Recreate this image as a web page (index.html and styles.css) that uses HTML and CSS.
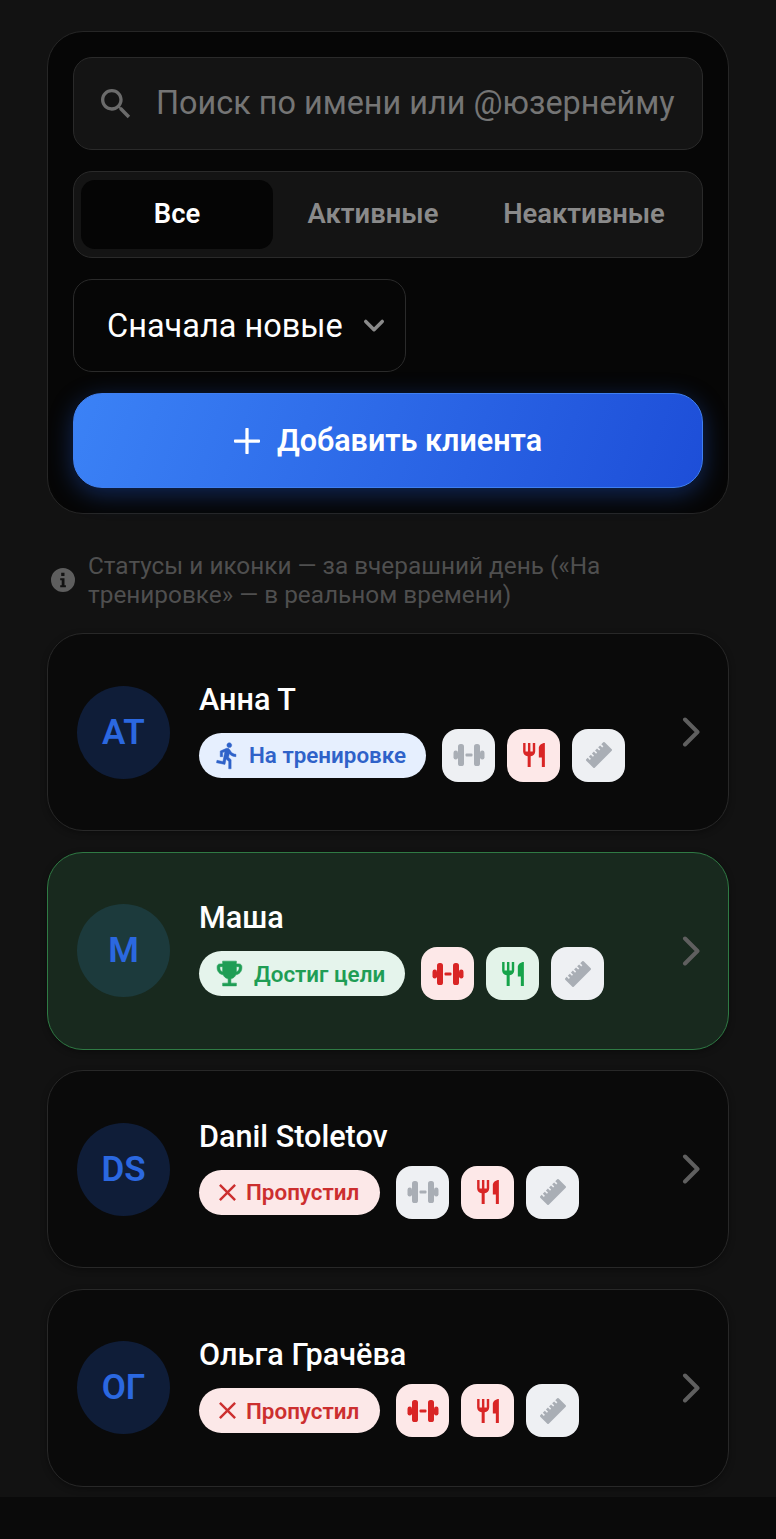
FILE: index.html
```html
<!DOCTYPE html>
<html lang="ru">
<head>
  <meta charset="UTF-8">
  <meta name="viewport" content="width=device-width, initial-scale=1.0">
  <title>Клиенты</title>
  <link rel="stylesheet" href="styles.css">
</head>
<body>

  <svg class="sprite" width="0" height="0">
    <symbol id="i-dumbbell" viewBox="0 0 32 32">
      <rect x="0.5" y="11.5" width="4.5" height="9" rx="2.2"/>
      <rect x="5" y="5" width="6" height="22" rx="2.6"/>
      <rect x="12.5" y="14.5" width="7" height="3" rx="1"/>
      <rect x="21" y="5" width="6" height="22" rx="2.6"/>
      <rect x="27" y="11.5" width="4.5" height="9" rx="2.2"/>
    </symbol>
    <symbol id="i-food" viewBox="-1.25 -1.25 26.5 26.5">
      <path d="M11 9H9V2H7v7H5V2H3v7c0 2.12 1.66 3.84 3.75 3.97V22h2.5v-9.03C11.34 12.84 13 11.12 13 9V2h-2v7zm5-3v8h2.5v8H21V2c-2.76 0-5 2.24-5 4z"/>
    </symbol>
    <symbol id="i-ruler" viewBox="0 0 32 32">
      <path transform="rotate(-45 16 16)" d="M4 10h2v3h1.6v-3h2.8v3H12v-3h2.8v3h1.6v-3h2.8v3h1.6v-3h2.8v3h1.6v-3H28a1 1 0 0 1 1 1V21a1 1 0 0 1-1 1H4a1 1 0 0 1-1-1V11a1 1 0 0 1 1-1z"/>
    </symbol>
    <symbol id="i-run" viewBox="0 0 24 24">
      <path d="M13.49 5.48c1.1 0 2-.9 2-2s-.9-2-2-2-2 .9-2 2 .9 2 2 2zm-3.6 13.9l1-4.4 2.1 2v6h2v-7.5l-2.1-2 .6-3c1.3 1.5 3.3 2.5 5.5 2.5v-2c-1.9 0-3.5-1-4.3-2.4l-1-1.6c-.4-.6-1-1-1.7-1-.3 0-.5.1-.8.1l-5.2 2.2v4.7h2v-3.4l1.8-.7-1.6 8.1-4.9-1-.4 2 7 1.4z"/>
    </symbol>
    <symbol id="i-trophy" viewBox="0 0 24 24">
      <path d="M19 5h-2V3H7v2H5c-1.1 0-2 .9-2 2v1c0 2.55 1.92 4.63 4.39 4.94.63 1.5 1.98 2.63 3.61 2.96V19H7v2h10v-2h-4v-3.1c1.63-.33 2.98-1.46 3.61-2.96C19.08 12.63 21 10.55 21 8V7c0-1.1-.9-2-2-2zM5 8V7h2v3.82C5.84 10.4 5 9.3 5 8zm14 0c0 1.3-.84 2.4-2 2.82V7h2v1z"/>
    </symbol>
    <symbol id="i-close" viewBox="0 0 24 24">
      <path d="M19 6.41L17.59 5 12 10.59 6.41 5 5 6.41 10.59 12 5 17.59 6.41 19 12 13.41 17.59 19 19 17.59 13.41 12z"/>
    </symbol>
    <symbol id="i-chevron" viewBox="0 0 24 24">
      <path d="M8 2l10 10-10 10" fill="none" stroke="currentColor" stroke-width="3.2" stroke-linecap="round" stroke-linejoin="round"/>
    </symbol>
  </svg>

  <main class="page">
    <section class="panel">
      <div class="search">
        <svg class="search-icon" viewBox="0 0 24 24"><path d="M15.5 14h-.79l-.28-.27C15.41 12.59 16 11.11 16 9.5 16 5.91 13.09 3 9.5 3S3 5.91 3 9.5 5.91 16 9.5 16c1.61 0 3.09-.59 4.23-1.57l.27.28v.79l5 4.99L20.49 19l-4.99-5zm-6 0C7.01 14 5 11.99 5 9.5S7.01 5 9.5 5 14 7.01 14 9.5 11.99 14 9.5 14z"/></svg>
        <span class="search-text">Поиск по имени или @юзернейму</span>
      </div>

      <div class="tabs">
        <div class="tab tab-active">Все</div>
        <div class="tab">Активные</div>
        <div class="tab">Неактивные</div>
      </div>

      <div class="sort">
        <span>Сначала новые</span>
        <svg class="sort-icon" viewBox="0 0 24 24"><path d="M3 7l9 9 9-9" fill="none" stroke="currentColor" stroke-width="3.8" stroke-linecap="round" stroke-linejoin="round"/></svg>
      </div>

      <button class="add-btn" type="button">
        <svg class="add-icon" viewBox="0 0 24 24"><path d="M12 1v22M1 12h22" fill="none" stroke="currentColor" stroke-width="3" stroke-linecap="round"/></svg>
        <span>Добавить клиента</span>
      </button>
    </section>

    <p class="hint">
      <svg class="hint-icon" viewBox="0 0 24 24"><path fill-rule="evenodd" d="M12 0a12 12 0 1 0 0 24 12 12 0 0 0 0-24zm-1.8 4.8h3.3v3.3h-3.3zM9.2 10.2h4.3v7h1.400v2H9.200v-2h1.500v-5H9.200z"/></svg>
      <span>Статусы и иконки — за вчерашний день («На тренировке» — в реальном времени)</span>
    </p>

    <div class="clients">
      <article class="card">
        <div class="avatar">АТ</div>
        <div class="info">
          <div class="name">Анна Т</div>
          <div class="row">
            <span class="chip chip-blue"><svg class="chip-icon"><use href="#i-run"/></svg>На тренировке</span>
            <div class="tiles">
              <span class="tile tile-gray"><svg><use href="#i-dumbbell"/></svg></span>
              <span class="tile tile-red"><svg><use href="#i-food"/></svg></span>
              <span class="tile tile-gray"><svg><use href="#i-ruler"/></svg></span>
            </div>
          </div>
        </div>
        <svg class="chevron"><use href="#i-chevron"/></svg>
      </article>

      <article class="card card-goal">
        <div class="avatar">М</div>
        <div class="info">
          <div class="name">Маша</div>
          <div class="row">
            <span class="chip chip-green"><svg class="chip-icon"><use href="#i-trophy"/></svg>Достиг цели</span>
            <div class="tiles">
              <span class="tile tile-red"><svg><use href="#i-dumbbell"/></svg></span>
              <span class="tile tile-green"><svg><use href="#i-food"/></svg></span>
              <span class="tile tile-gray"><svg><use href="#i-ruler"/></svg></span>
            </div>
          </div>
        </div>
        <svg class="chevron"><use href="#i-chevron"/></svg>
      </article>

      <article class="card">
        <div class="avatar">DS</div>
        <div class="info">
          <div class="name">Danil Stoletov</div>
          <div class="row">
            <span class="chip chip-red"><svg class="chip-icon"><use href="#i-close"/></svg>Пропустил</span>
            <div class="tiles">
              <span class="tile tile-gray"><svg><use href="#i-dumbbell"/></svg></span>
              <span class="tile tile-red"><svg><use href="#i-food"/></svg></span>
              <span class="tile tile-gray"><svg><use href="#i-ruler"/></svg></span>
            </div>
          </div>
        </div>
        <svg class="chevron"><use href="#i-chevron"/></svg>
      </article>

      <article class="card">
        <div class="avatar">ОГ</div>
        <div class="info">
          <div class="name">Ольга Грачёва</div>
          <div class="row">
            <span class="chip chip-red"><svg class="chip-icon"><use href="#i-close"/></svg>Пропустил</span>
            <div class="tiles">
              <span class="tile tile-red"><svg><use href="#i-dumbbell"/></svg></span>
              <span class="tile tile-red"><svg><use href="#i-food"/></svg></span>
              <span class="tile tile-gray"><svg><use href="#i-ruler"/></svg></span>
            </div>
          </div>
        </div>
        <svg class="chevron"><use href="#i-chevron"/></svg>
      </article>
    </div>
  </main>

  <div class="bottom-bar"></div>

</body>
</html>
```

FILE: styles.css
```css
* {
  box-sizing: border-box;
}
body {
  margin: 0;
  background-color: #0a0a0a;
  font-family: Roboto, "Liberation Sans", sans-serif;
  color: #fff;
}
.sprite {
  display: block;
  height: 0;
}
.page {
  height: 1497px;
  padding: 31px 47px 0;
  background-color: #121212;
}
.bottom-bar {
  height: 42px;
}

/* top panel */
.panel {
  display: flex;
  flex-direction: column;
  gap: 21px;
  height: 483px;
  padding: 25px;
  background-color: #060606;
  border: 1px solid #262626;
  border-radius: 36px;
}
.search {
  display: flex;
  align-items: center;
  gap: 20px;
  height: 93px;
  padding: 0 22px;
  background-color: #141414;
  border: 1px solid #2a2a2a;
  border-radius: 19px;
}
.search-icon {
  width: 40px;
  height: 40px;
  flex: none;
  fill: #6b6b6b;
}
.search-text {
  padding-bottom: 2px;
  font-size: 32.4px;
  color: #757575;
  white-space: nowrap;
}
.tabs {
  display: grid;
  grid-template-columns: 192px 200px 222px;
  height: 87px;
  padding: 8px 7px;
  background-color: #141414;
  border: 1px solid #2a2a2a;
  border-radius: 19px;
}
.tab {
  display: flex;
  align-items: center;
  justify-content: center;
  padding-bottom: 2px;
  font-size: 27.4px;
  font-weight: 600;
  color: #8a8a8a;
}
.tab-active {
  background-color: #050505;
  border-radius: 14px;
  color: #fff;
}
.sort {
  display: flex;
  align-items: center;
  justify-content: space-between;
  width: 333px;
  height: 93px;
  padding: 0 20px 0 33px;
  background-color: #060606;
  border: 1px solid #2a2a2a;
  border-radius: 19px;
  font-size: 32.5px;
}
.sort-icon {
  width: 22px;
  height: 22px;
  color: #8a8a8a;
}
.add-btn {
  display: flex;
  align-items: center;
  justify-content: center;
  gap: 17px;
  height: 95px;
  background: linear-gradient(110deg, #3b82f6, #1d4ed8);
  border: 1px solid #3f7ff0;
  border-radius: 29px;
  box-shadow: 0 6px 24px rgba(37, 99, 235, 0.36);
  color: #fff;
  font-family: inherit;
  font-size: 30.5px;
  font-weight: 600;
}
.add-icon {
  width: 26px;
  height: 26px;
}

/* hint */
.hint {
  display: flex;
  align-items: center;
  gap: 13px;
  margin: 37px 0 24px;
  padding-left: 4px;
  font-size: 24.35px;
  line-height: 29px;
  color: #4f4f4f;
}
.hint-icon {
  width: 24px;
  height: 24px;
  flex: none;
  fill: #5e5e5e;
}

/* clients */
.clients {
  display: flex;
  flex-direction: column;
  gap: 20.67px;
}
.card {
  display: flex;
  align-items: center;
  height: 198px;
  padding: 0 23px 0 29px;
  background-color: #0a0a0a;
  border: 1px solid #282828;
  border-radius: 36px;
  box-shadow: 0 2px 6px rgba(0, 0, 0, 0.35);
}
.card-goal {
  background-color: #18291e;
  border-color: #2f7a44;
}
.avatar {
  display: flex;
  align-items: center;
  justify-content: center;
  width: 93px;
  height: 93px;
  flex: none;
  margin-right: 29px;
  background-color: #0f1d38;
  border-radius: 50%;
  font-size: 35px;
  font-weight: 600;
  color: #2b68e0;
}
.card-goal .avatar {
  background-color: #1c3a3c;
}
.info {
  display: flex;
  flex-direction: column;
  gap: 13px;
  flex: 1;
}
.name {
  font-size: 30.6px;
  font-weight: 500;
  line-height: 33px;
}
.row {
  display: flex;
  align-items: center;
  gap: 16px;
}
.chip {
  display: flex;
  align-items: center;
  gap: 7px;
  height: 45px;
  padding: 0 20px 0 14px;
  border-radius: 23px;
  font-size: 22.4px;
  font-weight: 600;
  white-space: nowrap;
}
.chip-icon {
  width: 29px;
  height: 29px;
  fill: currentColor;
  stroke: currentColor;
  stroke-width: 0.4px;
}
.chip-blue {
  background-color: #e6effe;
  color: #2f62c9;
}
.chip-green {
  background-color: #e5f4ec;
  color: #1f9d55;
}
.chip-green .chip-icon {
  width: 33px;
  height: 33px;
  margin-right: 1px;
}
.chip-red {
  gap: 4px;
  padding-right: 21px;
  background-color: #fce8e8;
  color: #cc2f2f;
}
.chip-red .chip-icon {
  stroke: none;
}
.tiles {
  display: flex;
  gap: 12px;
}
.tile {
  display: flex;
  align-items: center;
  justify-content: center;
  width: 53px;
  height: 53px;
  border-radius: 16px;
}
.tile svg {
  width: 32px;
  height: 32px;
  fill: currentColor;
}
.tile-gray {
  background-color: #eef0f3;
  color: #a9aeb5;
}
.tile-red {
  background-color: #fde8e8;
  color: #d92525;
}
.tile-green {
  background-color: #e3f3e9;
  color: #16a34a;
}
.chevron {
  width: 30px;
  height: 30px;
  flex: none;
  color: #5f5f5f;
}
```
